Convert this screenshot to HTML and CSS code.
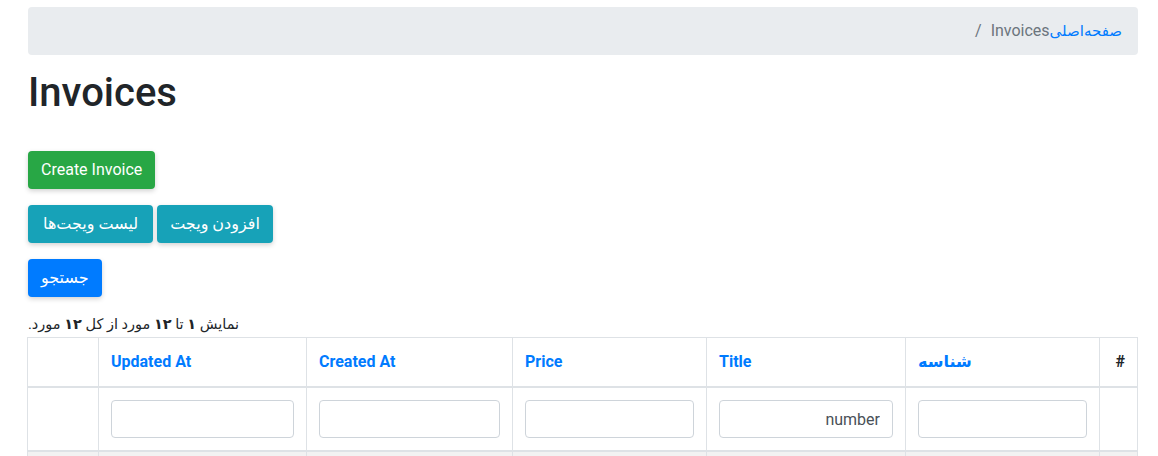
FILE: index.html
```html
<!DOCTYPE html>
<html lang="fa" dir="rtl">
<head>
<meta charset="utf-8">
<title>Invoices</title>
<link rel="stylesheet" href="styles.css">
</head>
<body>
<div class="container">
  <nav class="breadcrumb">
    <a class="crumb-link" href="#">صفحه‌اصلی</a><span class="crumb-active">Invoices</span><span class="crumb-sep">/</span>
  </nav>
  <h1 class="title" dir="ltr">Invoices</h1>
  <p class="actions"><a class="btn btn-success" href="#">Create Invoice</a></p>
  <p class="actions"><a class="btn btn-info" href="#">افزودن ویجت</a> <a class="btn btn-info" href="#">لیست ویجت‌ها</a></p>
  <p class="actions"><a class="btn btn-primary" href="#">جستجو</a></p>
  <div class="summary">نمایش <b>۱</b> تا <b>۱۲</b> مورد از کل <b>۱۲</b> مورد.</div>
  <table class="grid">
    <colgroup>
      <col class="c-num"><col class="c-id"><col class="c-title"><col class="c-price"><col class="c-created"><col class="c-updated"><col class="c-act">
    </colgroup>
    <thead>
      <tr class="head-row">
        <th>#</th>
        <th><a href="#">شناسه</a></th>
        <th><a href="#">Title</a></th>
        <th><a href="#">Price</a></th>
        <th><a href="#">Created At</a></th>
        <th><a href="#">Updated At</a></th>
        <th></th>
      </tr>
      <tr class="filter-row">
        <td></td>
        <td><input class="form-control" type="text"></td>
        <td><input class="form-control" type="text" value="number"></td>
        <td><input class="form-control" type="text"></td>
        <td><input class="form-control" type="text"></td>
        <td><input class="form-control" type="text"></td>
        <td></td>
      </tr>
    </thead>
    <tbody>
      <tr class="striped"><td>&nbsp;</td><td></td><td></td><td></td><td></td><td></td><td></td></tr>
    </tbody>
  </table>
</div>
</body>
</html>
```
FILE: styles.css
```css
html, body {
  margin: 0;
  padding: 0;
  background: #fff;
}
body {
  font-family: Roboto, "DejaVu Sans", "Noto Sans", sans-serif;
  font-size: 16px;
  line-height: 1.5;
  color: #212529;
  direction: rtl;
  text-align: left;
}
.container {
  margin: 0 20px 0 28px;
  padding-top: 7px;
}
a { color: #007bff; text-decoration: none; }

.breadcrumb {
  display: flex;
  align-items: center;
  background: #e9ecef;
  border-radius: 4px;
  padding: 12px 16px;
  height: 24px;
  margin-bottom: 16px;
  font-size: 16px;
}
.crumb-link { font-size: 15px; }
.crumb-active { color: #6c757d; }
.crumb-sep { color: #6c757d; margin-right: 9px; }

.title {
  font-size: 40px;
  font-weight: 500;
  line-height: 48px;
  margin: -2px 0 34px;
  text-align: left;
}
.actions {
  margin: 0 0 16px;
}
.btn {
  display: inline-block;
  font-size: 16px;
  line-height: 24px;
  padding: 7px 12px;
  border-radius: 4px;
  color: #fff;
  box-shadow: 0 2px 5px rgba(0,0,0,.18);
  vertical-align: middle;
}
.btn-success { background: #28a745; padding: 7px 13px; }
.btn-info { background: #17a2b8; padding: 7px 13px; }
.btn-info:last-child { padding: 7px 15px; }
.btn-primary { background: #007bff; padding: 7px 13px; }

.summary {
  font-size: 14.5px;
  line-height: 24px;
}
.summary b { font-weight: 700; }

.grid {
  width: 100%;
  table-layout: fixed;
  border-collapse: collapse;
}
.c-num { width: 38px; }
.c-id { width: 194px; }
.c-title { width: 199px; }
.c-price { width: 194px; }
.c-created { width: 206px; }
.c-updated { width: 208px; }
.c-act { width: 71px; }

.grid th, .grid td {
  border: 1px solid #dee2e6;
  padding: 12px;
  text-align: left;
  vertical-align: top;
}
.grid .head-row th {
  font-weight: 700;
  line-height: 24px;
  font-size: 16px;
}
.grid .head-row th:first-child { text-align: right; }
.grid thead tr.head-row th { border-bottom-width: 2px; }
.grid thead tr.filter-row td { border-bottom-width: 2px; }
.grid .striped td { background: #f2f2f2; line-height: 24px; }

.form-control {
  display: block;
  box-sizing: border-box;
  width: 100%;
  height: 38px;
  padding: 6px 12px;
  font-family: Roboto, "DejaVu Sans", sans-serif;
  font-size: 16px;
  color: #495057;
  background: #fff;
  border: 1px solid #ced4da;
  border-radius: 4px;
  direction: rtl;
}
```
